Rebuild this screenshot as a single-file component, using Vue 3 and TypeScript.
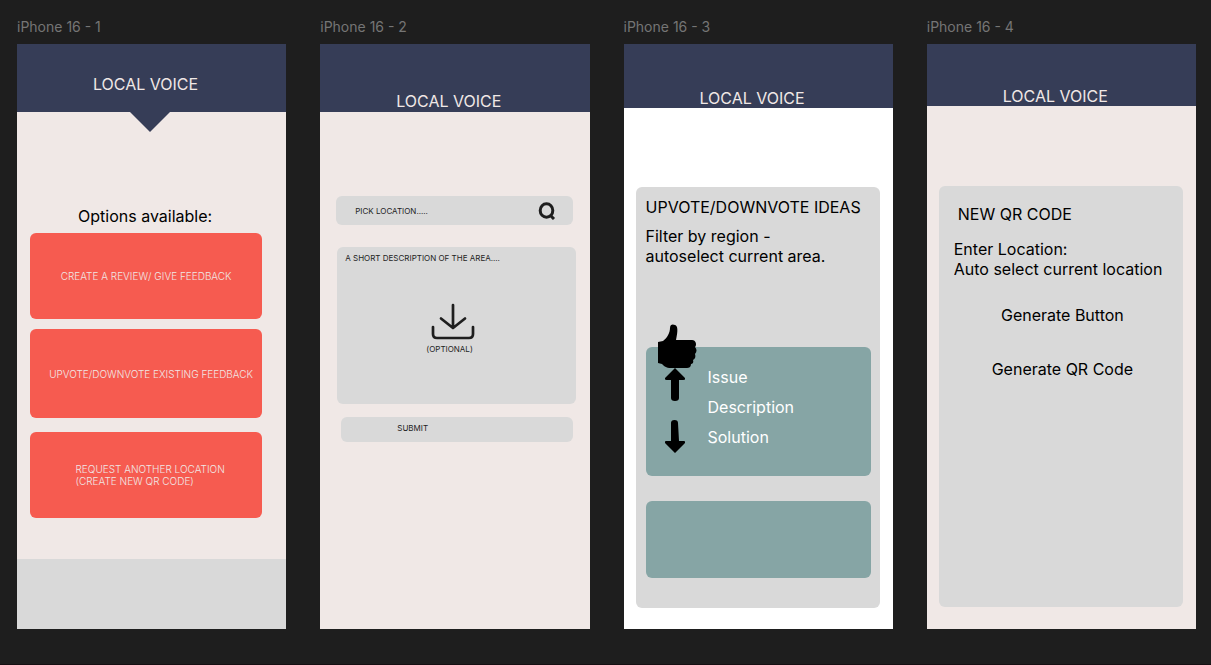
<script setup lang="ts">
import { ref } from 'vue'

interface Option {
  id: string
  lines: string[]
}

const options: Option[] = [
  { id: 'create', lines: ['CREATE A REVIEW/ GIVE FEEDBACK'] },
  { id: 'vote', lines: ['UPVOTE/DOWNVOTE EXISTING FEEDBACK'] },
  { id: 'request', lines: ['REQUEST ANOTHER LOCATION', '(CREATE NEW QR CODE)'] },
]

const ideaFields: string[] = ['Issue', 'Description', 'Solution']

const place = ref('')
const description = ref('')
const qrLocation = ref('Auto select current location')
</script>

<template>
  <main class="canvas">
    <section class="frame">
      <h2 class="frame-name">iPhone 16 - 1</h2>
      <div class="screen home">
        <header class="bar">LOCAL VOICE</header>
        <svg class="notch" width="40" height="20" viewBox="0 0 40 20" aria-hidden="true">
          <path d="M0 0H40L20 20Z" fill="#363d57" />
        </svg>
        <h3 class="options-title">Options available:</h3>
        <nav class="options">
          <button v-for="o in options" :key="o.id" type="button" class="option" :class="o.id">
            <span class="option-text">
              <span v-for="line in o.lines" :key="line" class="line">{{ line }}</span>
            </span>
          </button>
        </nav>
        <footer class="foot"></footer>
      </div>
    </section>

    <section class="frame">
      <h2 class="frame-name">iPhone 16 - 2</h2>
      <div class="screen review">
        <header class="bar">LOCAL VOICE</header>
        <form class="review-form" @submit.prevent>
          <div class="search">
            <input v-model="place" type="text" aria-label="Pick location" placeholder="PICK LOCATION....." />
            <button type="button" class="plain" aria-label="Search">
              <svg width="18" height="18" viewBox="0 0 18 18" fill="none" stroke="#1e1e1e" stroke-width="3">
                <ellipse cx="8.500" cy="8.500" rx="6.300" ry="6.700" />
                <path d="M12 13L16 17" />
              </svg>
            </button>
          </div>
          <div class="describe">
            <textarea v-model="description" rows="2" aria-label="Description" placeholder="A SHORT DESCRIPTION OF THE AREA...."></textarea>
            <button type="button" class="plain upload">
              <svg width="44" height="37" viewBox="0 0 44 37" fill="none" stroke="#1e1e1e" stroke-width="2.700" stroke-linecap="round" stroke-linejoin="round">
                <path d="M22 2V25M10 15.500L22 25L34 15.500" />
                <path d="M2 24V31Q2 35 6 35H38Q42 35 42 31V24" />
              </svg>
              <span>(OPTIONAL)</span>
            </button>
          </div>
          <button type="submit" class="submit">SUBMIT</button>
        </form>
      </div>
    </section>

    <section class="frame">
      <h2 class="frame-name">iPhone 16 - 3</h2>
      <div class="screen ideas">
        <header class="bar">LOCAL VOICE</header>
        <div class="card">
          <h3 class="card-title">UPVOTE/DOWNVOTE IDEAS</h3>
          <p class="filter">Filter by region -<br />autoselect current area.</p>
          <article class="idea">
            <div class="votes">
              <svg class="thumb" width="39" height="44" viewBox="0 0 39 44" aria-hidden="true">
                <path d="M0 18L5 17C9 14 12 9 12 4C12 0 15 0 17 1C20 2 20 7 18 16H34C38 16 39 21 37 23C39 25 39 28 37 30C38 33 37 35 35 36C36 39 34 40 33 40C33 43 31 44 29 44H13C8 44 6 42 4 40L0 39Z" fill="#000" />
              </svg>
              <button type="button" class="plain" aria-label="Upvote">
                <svg width="20" height="33" viewBox="0 0 20 33">
                  <path d="M10 0L20 10C21 12 19 12 18 12H14V30Q14 33 10 33T6 30V12H2C1 12 -1 12 0 10Z" />
                </svg>
              </button>
              <button type="button" class="plain" aria-label="Downvote">
                <svg width="20" height="33" viewBox="0 0 20 33">
                  <path d="M10 33L20 23C21 21 19 21 18 21H14L13 3Q13 0 9.500 0T6 3V21H2C1 21 -1 21 0 23Z" />
                </svg>
              </button>
            </div>
            <ul class="fields">
              <li v-for="f in ideaFields" :key="f">{{ f }}</li>
            </ul>
          </article>
          <article class="idea empty"></article>
        </div>
      </div>
    </section>

    <section class="frame">
      <h2 class="frame-name">iPhone 16 - 4</h2>
      <div class="screen qr">
        <header class="bar">LOCAL VOICE</header>
        <form class="card" @submit.prevent>
          <h3 class="card-title">NEW QR CODE</h3>
          <label for="qr-location">Enter Location:</label>
          <input id="qr-location" v-model="qrLocation" type="text" />
          <button type="button" class="plain generate">Generate Button</button>
          <button type="submit" class="plain generate">Generate QR Code</button>
        </form>
      </div>
    </section>
  </main>
</template>

<style>
body {
  margin: 0;
  background: #1e1e1e;
}
</style>

<style scoped>
* {
  box-sizing: border-box;
}

.canvas {
  display: grid;
  grid-template-columns: repeat(4, minmax(0, 1fr));
  gap: 34px;
  min-height: 100vh;
  padding: 17px 15px 35px 17px;
  border-bottom: 1px solid #160f12;
  background: #1e1e1e;
  color: #000;
  font: 400 16px/20px Inter, "Liberation Sans", sans-serif;
}

h2,
h3,
p,
ul {
  margin: 0;
  padding: 0;
  font: inherit;
  list-style: none;
}

button,
input,
textarea {
  margin: 0;
  padding: 0;
  border: 0;
  background: none;
  color: inherit;
  font: inherit;
}

button {
  cursor: pointer;
}

svg {
  display: block;
}

.frame {
  display: flex;
  flex-direction: column;
}

.frame-name {
  height: 27px;
  color: #757575;
  font-size: 14px;
}

.screen {
  display: flex;
  flex: 1;
  flex-direction: column;
  background: #f0e8e6;
}

.ideas {
  background: #fff;
}

.bar {
  display: flex;
  align-items: flex-end;
  height: 68px;
  padding: 0 0 1px 76px;
  background: #363d57;
  color: #f0e8e6;
}

.home .bar {
  padding-bottom: 18px;
}

.ideas .bar {
  height: 64px;
  padding-bottom: 0;
}

.qr .bar {
  height: 62px;
  padding-bottom: 0;
}

.notch {
  margin-left: 113px;
}

.options-title {
  margin: 74px 0 7px 61px;
}

.options {
  display: flex;
  flex-direction: column;
  margin: 0 24px 0 13px;
}

.option {
  display: flex;
  align-items: center;
  justify-content: center;
  height: 86px;
  border-radius: 6px;
  background: #f65b50;
  color: #f0e8e6;
  font-size: 10px;
  font-weight: 300;
  line-height: 12px;
  text-align: left;
}

.option.vote {
  height: 89px;
  margin: 10px 0 14px;
  padding-left: 10px;
}

.option.request {
  padding-left: 8px;
}

.line {
  display: block;
}

.foot {
  height: 70px;
  margin-top: auto;
  background: #d9d9d9;
}

.review-form {
  display: flex;
  flex-direction: column;
  margin: 84px 14px 0 16px;
  color: #1e1e1e;
  font-size: 8px;
  line-height: 10px;
}

.search {
  display: flex;
  align-items: center;
  height: 29px;
  margin-right: 3px;
  padding: 0 17px 0 19px;
  border-radius: 6px;
  background: #d9d9d9;
}

.search input {
  flex: 1;
  min-width: 0;
}

::placeholder {
  color: #1e1e1e;
  opacity: 1;
}

.describe {
  display: flex;
  flex-direction: column;
  height: 157px;
  margin: 22px 0 13px 1px;
  padding: 6px 8px;
  border-radius: 6px;
  background: #d9d9d9;
}

.describe textarea {
  height: 50px;
  resize: none;
}

.upload {
  display: flex;
  flex-direction: column;
  align-items: flex-end;
  gap: 4px;
  width: 49px;
  margin-left: 81px;
}

.upload span {
  align-self: flex-start;
}

.submit {
  height: 25px;
  margin: 0 3px 0 5px;
  padding: 0 0 4px 56px;
  border-radius: 6px;
  background: #d9d9d9;
  text-align: left;
}

.card {
  display: flex;
  flex: 1;
  flex-direction: column;
  margin: 79px 13px 21px 12px;
  border-radius: 6px;
  background: #d9d9d9;
}

.ideas .card {
  padding: 10px 9px 0 10px;
}

.card-title {
  white-space: nowrap;
}

.filter {
  margin-top: 9px;
}

.idea {
  display: flex;
  height: 129px;
  margin-top: 81px;
  padding-left: 12px;
  border-radius: 6px;
  background: #86a5a5;
}

.idea.empty {
  height: 77px;
  margin-top: 25px;
}

.votes {
  display: flex;
  flex-direction: column;
  align-items: center;
  width: 39px;
  margin-top: -23px;
}

.votes button {
  margin: 0 5px 19px 0;
}

.fields {
  display: flex;
  flex-direction: column;
  gap: 10px;
  padding: 20px 0 0 11px;
  color: #fff;
}

.qr .card {
  margin: 80px 13px 22px 12px;
  padding: 18px 12px 0 15px;
}

.qr .card-title {
  margin: 0 0 15px 4px;
}

.qr .card input {
  height: 20px;
}

.generate {
  align-self: center;
  margin-top: 26px;
}

.generate + .generate {
  margin-top: 34px;
}
</style>
